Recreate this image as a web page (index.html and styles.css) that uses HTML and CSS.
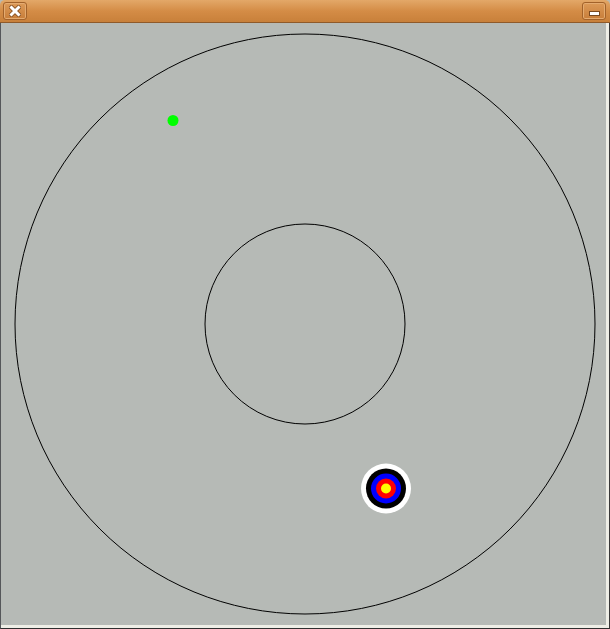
FILE: index.html
```html
<!DOCTYPE html>
<html>
<head>
<meta charset="utf-8">
<link rel="stylesheet" href="styles.css">
</head>
<body>
<div class="window">
  <div class="titlebar">
    <div class="tbtn">
      <svg width="12" height="12" viewBox="0 0 12 12"><path d="M2.5 2.5 L9.5 9.5 M9.5 2.5 L2.5 9.5" stroke="#8a5424" stroke-width="4.6" stroke-linecap="square"/><path d="M2.5 2.5 L9.5 9.5 M9.5 2.5 L2.5 9.5" stroke="#fff" stroke-width="3" stroke-linecap="square"/></svg>
    </div>
    <div class="tbtn">
      <span class="minbar"></span>
    </div>
  </div>
  <div class="frame">
    <svg class="canvas" width="602" height="602" viewBox="4 23 602 602">
      <circle cx="305" cy="324" r="290" fill="none" stroke="#000" stroke-width="1"/>
      <circle cx="305" cy="324" r="100" fill="none" stroke="#000" stroke-width="1"/>
      <circle cx="173" cy="120.5" r="5.5" fill="#00ff00"/>
      <circle cx="386" cy="488.5" r="25" fill="#ffffff"/>
      <circle cx="386" cy="488.5" r="20" fill="#000000"/>
      <circle cx="386" cy="488.5" r="15" fill="#0000ff"/>
      <circle cx="386" cy="488.5" r="10" fill="#ff0000"/>
      <circle cx="386" cy="488.5" r="5" fill="#ffff00"/>
    </svg>
  </div>
</div>
</body>
</html>
```
FILE: styles.css
```css
html, body { margin: 0; padding: 0; background: #b6bab6; }
.window {
  width: 610px;
  height: 629px;
  display: flex;
  flex-direction: column;
  overflow: hidden;
  border-radius: 5px 5px 0 0;
}
.titlebar {
  height: 23px;
  flex: none;
  background: linear-gradient(#e3a868, #d48c46 50%, #c8803a);
  border-bottom: 1px solid #8f5a2a;
  display: flex;
  justify-content: space-between;
  align-items: center;
  padding: 0 4px 0 3px;
  box-sizing: border-box;
}
.tbtn {
  width: 24px;
  height: 18px;
  box-sizing: border-box;
  border: 1px solid #a2622a;
  border-radius: 3px;
  background: linear-gradient(#dc9a58, #c87e3a);
  box-shadow: inset 0 0 0 1px #e4ab70;
  display: flex;
  align-items: center;
  justify-content: center;
}
.minbar {
  width: 11px;
  height: 5px;
  background: #fff;
  border: 1px solid #7a4a20;
  box-sizing: border-box;
  margin-top: 4px;
}
.frame {
  flex: 1;
  background: #b6bab6;
  border-left: 1px solid #55575a;
  border-right: 1px solid #3a3a3a;
  border-bottom: 1px solid #2e2e2e;
  box-shadow: inset 0 -3px 0 #eeeee6, inset -3px 0 0 #eeeee6;
  padding: 0 3px 3px 3px;
  box-sizing: border-box;
  display: flex;
}
.canvas { display: block; flex: none; }
```
